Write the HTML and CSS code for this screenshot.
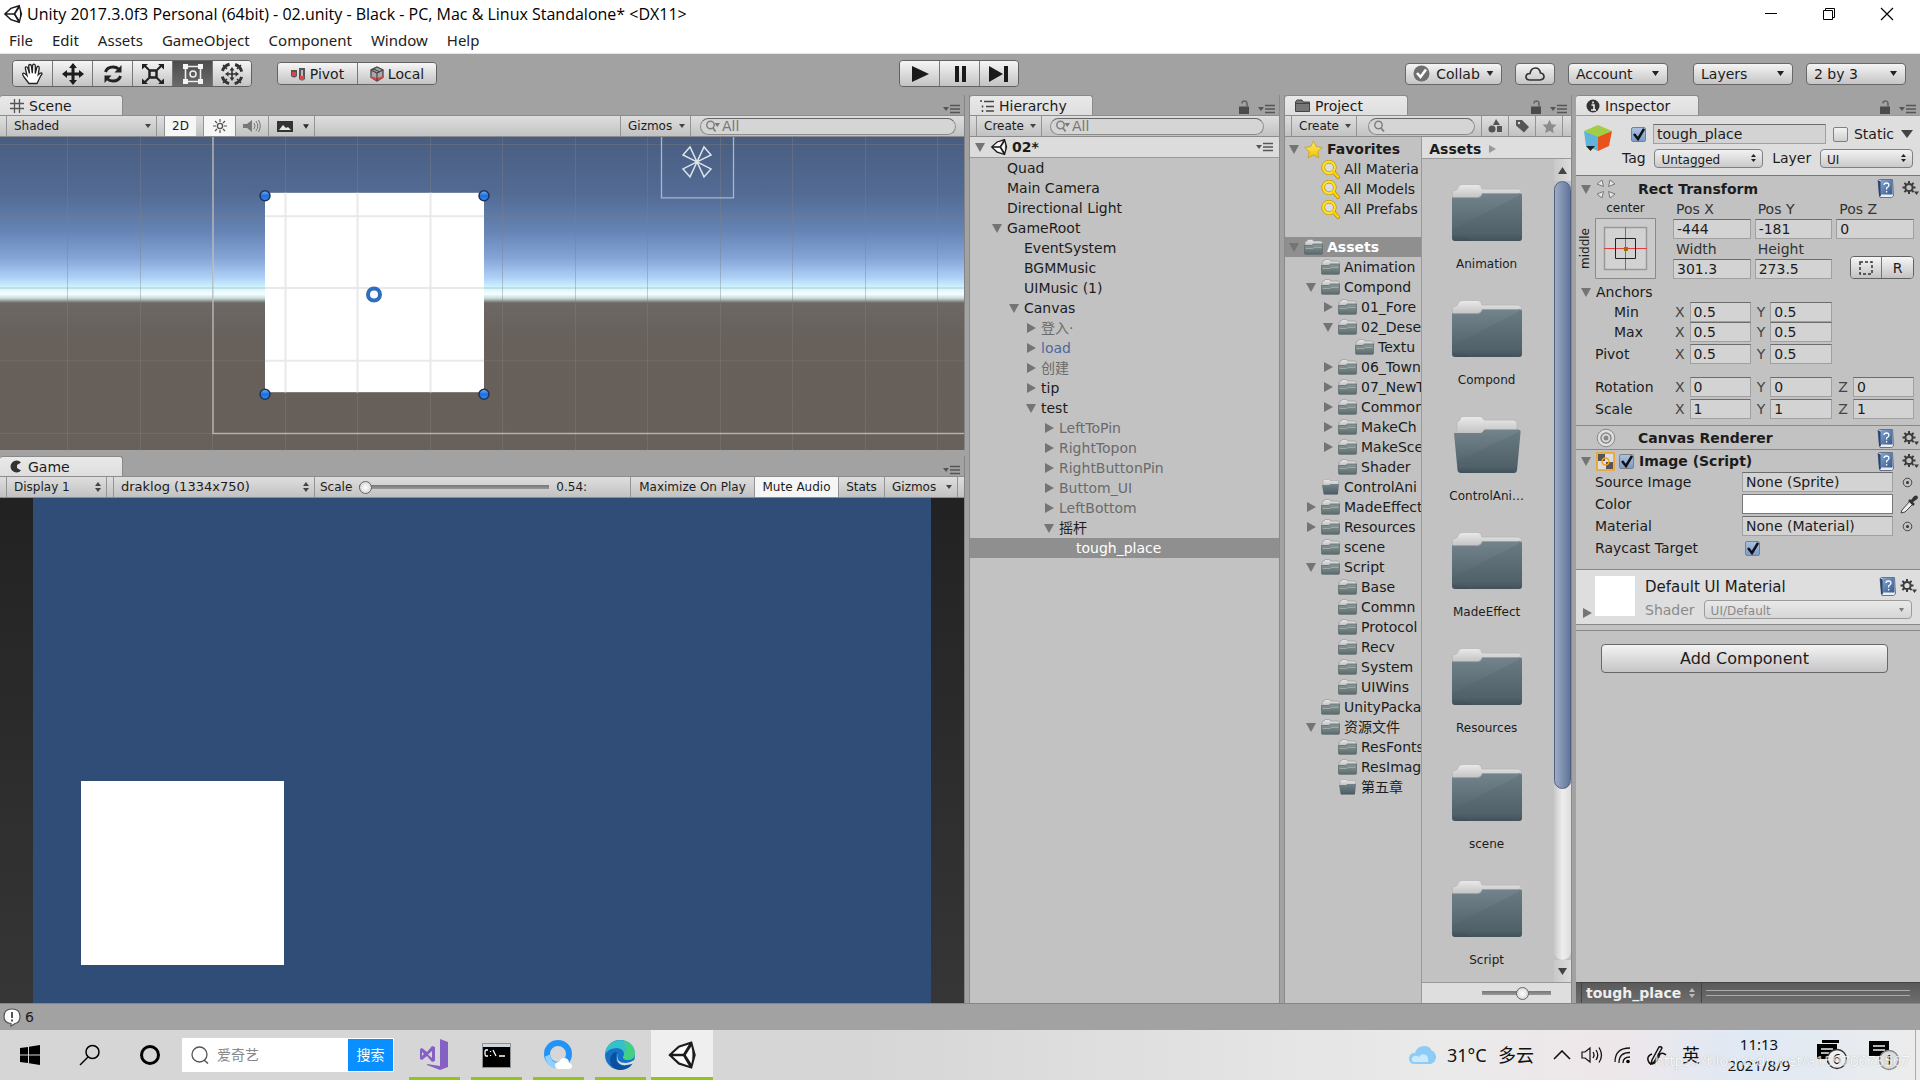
FILE: index.html
```html
<!DOCTYPE html>
<html lang="zh-CN">
<head>
<meta charset="utf-8">
<title>Unity 2017.3.0f3 Personal (64bit) - 02.unity</title>
<link rel="stylesheet" href="styles.css">
</head>
<body>
<svg class="defs" width="0" height="0" aria-hidden="true">
  <defs>
    <linearGradient id="gFolder" x1="0" y1="0" x2="0" y2="1"><stop offset="0" stop-color="#73848c"/><stop offset=".85" stop-color="#52626a"/><stop offset="1" stop-color="#3f4e56"/></linearGradient>
    <linearGradient id="gTab" x1="0" y1="0" x2="0" y2="1"><stop offset="0" stop-color="#eaeaea"/><stop offset="1" stop-color="#bdbdbd"/></linearGradient>
    <linearGradient id="gMini" x1="0" y1="0" x2="0" y2="1"><stop offset="0" stop-color="#8b9999"/><stop offset="1" stop-color="#5c6a6b"/></linearGradient>
    <linearGradient id="gBook" x1="0" y1="0" x2="1" y2="1"><stop offset="0" stop-color="#86a5cf"/><stop offset="1" stop-color="#35588c"/></linearGradient>
    <linearGradient id="gStar" x1="0" y1="0" x2="0" y2="1"><stop offset="0" stop-color="#fff06a"/><stop offset="1" stop-color="#f2c000"/></linearGradient>
    <linearGradient id="gBall" x1="0" y1="0" x2="0" y2="1"><stop offset="0" stop-color="#7fb0f0"/><stop offset=".5" stop-color="#1c6fe0"/><stop offset="1" stop-color="#2f8cff"/></linearGradient>
    <linearGradient id="gSky" x1="0" y1="0" x2="0" y2="1">
      <stop offset="0" stop-color="#495d80"/><stop offset=".18" stop-color="#536b94"/><stop offset=".3" stop-color="#6583b4"/><stop offset=".39" stop-color="#86a6d8"/><stop offset=".45" stop-color="#aed1f8"/><stop offset=".48" stop-color="#d0f3ff"/><stop offset=".502" stop-color="#f3ffff"/><stop offset=".515" stop-color="#c9dcd9"/><stop offset=".53" stop-color="#6d6865"/><stop offset=".65" stop-color="#67605b"/><stop offset="1" stop-color="#68605a"/>
    </linearGradient>
  </defs>
  <symbol id="unity" viewBox="0 0 24 24"><path fill="#1c1c1c" fill-rule="evenodd" d="M1 12 9 4.500 20 1l3 11-3 11-11-3.500zM4.500 11H13l4.500-7.500L10 6zM19.500 5 15 12l4.500 7c1.200-4 1.200-10 0-14zM4.500 13 10 18l7.500 2.500L13 13z"/><path fill="#fff" d="m5.500 10.600 5-4.300 5.800-1.600-3.500 5.900zM5.500 13.400l5 4.300 5.800 1.600-3.500-5.900zM19 6.500 15.600 12l3.400 5.500c.8-3 .8-8 0-11z" opacity=".85"/></symbol>
  <symbol id="down" viewBox="0 0 12 12"><path d="M1 2h10L6 11z" fill="#747474"/></symbol>
  <symbol id="right" viewBox="0 0 12 12"><path d="M2 1v10l9-5z" fill="#747474"/></symbol>
  <symbol id="folder" viewBox="0 0 19 16"><path d="M1 3.500 2 2h1l1-1.500h4.500L9.500 2H17l1.500 1.500V7H1z" fill="url(#gTab)" stroke="#8b8f8f" stroke-width=".6"/><path d="M.5 6.500h7L9.500 5h9v9.300q0 1-1 1h-16q-1 0-1-1z" fill="url(#gMini)" stroke="#59676a" stroke-width=".7"/><path d="M1.500 9.500h7l2-1h7" stroke="#a6b2b2" stroke-width=".8" fill="none"/></symbol>
  <symbol id="folderopen" viewBox="0 0 19 16"><path d="M2 2l1-1.500h5L9 1.500h8.500V7H2z" fill="url(#gTab)" stroke="#9a9a9a" stroke-width=".5"/><path d="M1 6h7l1.500-1H18l-1 9.500q0 1-1 1H3.500q-1 0-1-1z" fill="url(#gFolder)"/></symbol>
  <symbol id="bigfolder" viewBox="0 0 72 58"><path d="M1.500 12V7l4-1L8 2q1-1.500 3-1.500h16q2 0 3 2L31 5h36q3 0 3.500 3v8h-69z" fill="url(#gTab)" stroke="#b5b5b5" stroke-width=".7"/><path d="M1 13h26q2 0 3-1.500L31.500 9H68q3 0 3 3v42q0 3-3 3H4q-3 0-3-3z" fill="url(#gFolder)"/><path d="M71 10v44q0 3-3 3H20L1 46z" fill="#4b6069" opacity=".25"/><path d="M1.500 13.500H27q2 0 3-1.500l1.500-2.500H68" stroke="#93a5ac" fill="none"/></symbol>
  <symbol id="bigopen" viewBox="0 0 72 58"><path d="M6 20V7q0-1.500 2-2l2-3.500q.5-1 2-1h17q2 0 3 2L33 4h29q4 0 4 3v13z" fill="url(#gTab)" stroke="#b5b5b5" stroke-width=".7"/><path d="M3 17h26q2 0 3-1.500l1.500-2H67q3 0 2.500 3L66 54q-.5 3-3 3H10q-3 0-3.500-3z" fill="url(#gFolder)"/><path d="M69.500 15 66 54q-.5 3-3 3H22L5 46z" fill="#4b6069" opacity=".25"/></symbol>
  <symbol id="find" viewBox="0 0 19 19"><circle cx="8" cy="7.500" r="5.800" fill="#dcdcdc" stroke="#b99100" stroke-width="3.600"/><path d="m12.500 12 4.500 5" stroke="#b99100" stroke-width="4" stroke-linecap="round"/><circle cx="8" cy="7.500" r="5.800" fill="none" stroke="#ffe02a" stroke-width="2.200"/><path d="m12.500 12 4.500 5" stroke="#ffd400" stroke-width="2.500" stroke-linecap="round"/></symbol>
  <symbol id="star" viewBox="0 0 20 20"><path d="m10 1 2.800 6 6.400.8-4.700 4.500 1.200 6.600L10 15.700l-5.700 3.200 1.200-6.600L.8 7.800 7.200 7z" fill="url(#gStar)" stroke="#c79a1a" stroke-width=".8"/></symbol>
  <symbol id="menu" viewBox="0 0 17 10"><path d="M0 3h6L3 7z" fill="#555"/><path d="M7 1.500h10M7 5h10M7 8.500h10" stroke="#555" stroke-width="1.500"/></symbol>
  <symbol id="lock" viewBox="0 0 12 14"><path d="M1 6.500h10V14H1z" fill="#4b4b4b"/><path d="M9 6.500V4q0-3-2.500-3T4 3.500" fill="none" stroke="#666" stroke-width="1.600"/></symbol>
  <symbol id="caret" viewBox="0 0 8 6"><path d="M0 0h8L4 6z" fill="#2a2a2a"/></symbol>
  <symbol id="book" viewBox="0 0 17 19"><path d="M1 1.500 3 .5h12.500l1 16.500-2 1.500H3z" fill="#e9eef5" stroke="#4a5a70" stroke-width=".8"/><path d="M1 1.500 4 2.500v14l-2 1z" fill="#29436e"/><path d="M3.500 1h12v14.500h-12z" fill="url(#gBook)"/><path d="M7 6q.2-2 2.500-2T12 6q0 1.500-2.400 3v1.500M9.600 12v1.500" stroke="#fff" stroke-width="1.300" fill="none"/></symbol>
  <symbol id="gear" viewBox="0 0 17 17"><circle cx="7" cy="7.500" r="3.600" fill="none" stroke="#3c3c3c" stroke-width="2"/><path d="M7 1v2.500M7 11.500V14M.5 7.500H3M11 7.500h2.500M2.400 2.900l1.800 1.800M9.800 10.300l1.800 1.800M11.600 2.900 9.800 4.700M4.200 10.300l-1.800 1.800" stroke="#3c3c3c" stroke-width="2"/><path d="M12 11.500h5L14.500 15z" fill="#3c3c3c"/></symbol>
  <symbol id="lens" viewBox="0 0 14 12"><circle cx="4.500" cy="5" r="3.700" fill="none" stroke="#808080" stroke-width="1.500"/><path d="m7 8 3 3.500" stroke="#808080" stroke-width="1.800"/></symbol>
  <symbol id="lensv" viewBox="0 0 14 12"><circle cx="4.500" cy="5" r="3.700" fill="none" stroke="#808080" stroke-width="1.500"/><path d="m7 8 2.500 3.500" stroke="#808080" stroke-width="1.800"/><path d="M8.500 3H14l-2.700 4z" fill="#777"/></symbol>
  <symbol id="target" viewBox="0 0 11 11"><circle cx="5.500" cy="5.500" r="4.300" fill="none" stroke="#444"/><circle cx="5.500" cy="5.500" r="1.500" fill="#333"/></symbol>
</svg>

<header class="titlebar">
  <svg class="i20"><use href="#unity"/></svg>
  <h1>Unity 2017.3.0f3 Personal (64bit) - 02.unity - Black - PC, Mac &amp; Linux Standalone* &lt;DX11&gt;</h1>
  <div class="winbtns">
    <button aria-label="Minimize"><svg width="14" height="14"><path d="M1 6.500h12" stroke="#000"/></svg></button>
    <button aria-label="Restore"><svg width="14" height="14" fill="none" stroke="#000"><path d="M1.500 3.500h9v9h-9zM3.500 3.500v-2h9v9h-2"/></svg></button>
    <button aria-label="Close"><svg width="14" height="14"><path d="m1 1 12 12M13 1 1 13" stroke="#000" stroke-width="1.200"/></svg></button>
  </div>
</header>
<nav class="menubar"><a href="#">File</a><a href="#">Edit</a><a href="#">Assets</a><a href="#">GameObject</a><a href="#">Component</a><a href="#">Window</a><a href="#">Help</a></nav>

<div class="toolbar">
  <div class="tgroup">
    <div class="segs tall">
      <button aria-label="Hand"><svg width="24" height="22" viewBox="0 0 24 22"><path d="M8 20.500 3 14q-2-3-1-3.800 1.200-.7 4 2.300L4.500 6q-.5-2 .6-2.200T7 5.500l1.500 5-.8-7.300q0-1.700 1.200-1.700t1.500 1.700l.9 7 .3-7.500q.2-1.600 1.400-1.500t1.300 1.700v7.600l1.500-6q.5-1.500 1.600-1.200t.8 2l-1 6.500q2.500-2.500 3.500-1.800t-1 2.800L16 20.500z" fill="#fff" stroke="#222" stroke-width="1.300"/></svg></button>
      <button aria-label="Move"><svg width="22" height="22" viewBox="0 0 22 22"><path d="m11 0 4 5h-2.500v4.500H17V7l5 4-5 4v-2.500h-4.500V17H15l-4 5-4-5h2.500v-4.500H5V15l-5-4 5-4v2.500h4.500V5H7z" fill="#1c1c1c"/></svg></button>
      <button aria-label="Rotate"><svg width="22" height="22" viewBox="0 0 22 22"><path d="M3.500 9Q5 4 11 4q3.500 0 5.500 2M18.500 13Q17 18 11 18q-3.500 0-5.500-2" fill="none" stroke="#222" stroke-width="3"/><path d="M19.500 2v7.500h-7zM2.500 20v-7.500h7z" fill="#222"/></svg></button>
      <button aria-label="Scale"><svg width="24" height="22" viewBox="0 0 24 22"><path d="M8.500 7.500h7v7h-7z" fill="none" stroke="#222" stroke-width="2.500"/><path d="m3 2 5 5M21 2l-5 5M3 20l5-5M21 20l-5-5" stroke="#222" stroke-width="2"/><path d="M1 1h6L1 6.500zM23 1h-6l6 5.500zM1 21h6l-6-5.500zM23 21h-6l6-5.500z" fill="#222"/></svg></button>
      <button class="on" aria-label="Rect"><svg width="22" height="22" viewBox="0 0 22 22"><path d="M3.500 3.500h15v15h-15z" fill="none" stroke="#eee" stroke-width="1.600"/><path d="M1 1h5v5H1zM16 1h5v5h-5zM1 16h5v5H1zM16 16h5v5h-5z" fill="#f4f4f4"/><circle cx="11" cy="11" r="3" fill="none" stroke="#eee" stroke-width="1.500"/></svg></button>
      <button aria-label="Transform"><svg width="24" height="24" viewBox="0 0 24 24"><circle cx="12" cy="12" r="10" fill="none" stroke="#333" stroke-width="3" stroke-dasharray="10 5.700" stroke-dashoffset="-2.900"/><path d="m3 3 4 4M21 3l-4 4M3 21l4-4M21 21l-4-4" stroke="#333" stroke-width="1.500"/><path d="m12 5 2.500 3.500h-1.700v2.700h2.700V9.500L19 12l-3.500 2.500v-1.700h-2.700v2.700h1.700L12 19l-2.500-3.500h1.700v-2.700H8.500v1.700L5 12l3.500-2.500v1.700h2.700V8.500H9.500z" fill="#333"/></svg></button>
    </div>
    <div class="segs wide">
      <button><svg width="15" height="14"><path d="M0 3h6v6q-3 3-6 0z" fill="#555"/><path d="M1 5h4v4H1z" fill="#d8474b"/><path d="M8 1h6v11q-3 3-6 0z" fill="#555"/><path d="M10 3h2v7h-2z" fill="#bbb"/><path d="M9 9h4v4H9z" fill="#d8474b"/></svg>Pivot</button>
      <button><svg width="14" height="16" viewBox="0 0 14 16"><path d="m7 1 6 3v7.500L7 15l-6-3.500V4z" fill="#aaa" stroke="#444" stroke-width="1.300"/><path d="m1 10 6 2 6-2v2l-6 3-6-3z" fill="#d8474b"/><path d="m1 4 6 3 6-3M7 7v8M3 2.800l7 3.200" stroke="#444" fill="none" stroke-width="1.200"/></svg>Local</button>
    </div>
  </div>
  <div class="segs tall">
    <button aria-label="Play"><svg width="20" height="20"><path d="M2 2v16l17-8z" fill="#1a1a1a"/></svg></button>
    <button aria-label="Pause"><svg width="16" height="18"><path d="M3 1h4v16H3zM10 1h4v16h-4z" fill="#1a1a1a"/></svg></button>
    <button aria-label="Step"><svg width="22" height="20"><path d="M1 2v16l14-8zM16 2h4v16h-4z" fill="#1a1a1a"/></svg></button>
  </div>
  <div class="tgroup end">
    <button class="btn collab"><svg width="17" height="17"><circle cx="8.500" cy="8.500" r="8" fill="#6f6f6f"/><path d="m4 8 3.500 4L13 4.500" stroke="#fff" stroke-width="2.600" fill="none"/></svg>Collab<svg width="8" height="5"><use href="#caret"/></svg></button>
    <button class="btn cloud" aria-label="Services"><svg width="20" height="14"><path d="M5 13q-4 0-4-3.200T5 6.500Q6 1 10.500 1q4 0 5 5 3.500.5 3.500 3.600T15 13z" fill="none" stroke="#333" stroke-width="1.700"/></svg></button>
    <select class="drop" aria-label="Account"><option>Account</option></select>
    <select class="drop layers" aria-label="Layers"><option>Layers</option></select>
    <select class="drop" aria-label="Layout"><option>2 by 3</option></select>
  </div>
</div>

<main class="dock">
  <div class="col left">
    <section class="panel scene">
      <div class="tabs"><div class="tab"><svg width="14" height="14"><path d="M4.500 0v14M9.500 0v14M0 4.500h14M0 9.500h14" stroke="#555" stroke-width="1.300"/></svg>Scene</div><svg class="pm"><use href="#menu"/></svg></div>
      <div class="bar scenebar">
        <select class="cell shaded" aria-label="Draw mode"><option>Shaded</option></select>
        <button class="cell on two">2D</button>
        <button class="cell on light" aria-label="Lighting"><svg width="14" height="14"><circle cx="7" cy="7" r="2.600" fill="none" stroke="#555" stroke-width="1.400"/><path d="M7 0v3M7 11v3M0 7h3M11 7h3M2 2l2 2M10 10l2 2M12 2l-2 2M4 10l-2 2" stroke="#555" stroke-width="1.200"/></svg></button>
        <button class="cell ico" aria-label="Audio"><svg width="18" height="14"><path d="M0 5h4l5-4v12L4 9H0z" fill="#777"/><path d="M11 4q2 3 0 6M13 2q3.500 5 0 10M15.500 1q3.500 6 0 12" stroke="#777" fill="none"/></svg></button>
        <button class="cell fx" aria-label="Effects"><svg width="16" height="13"><path d="M0 1h16v11H0z" fill="#333"/><path d="m2 10 4-5 3 3 2-1 3 3z" fill="#e8e8e8"/></svg><svg width="6" height="5"><use href="#caret"/></svg></button>
        <select class="cell gz" aria-label="Gizmos"><option>Gizmos</option></select>
        <label class="search"><svg width="14" height="12"><use href="#lensv"/></svg><input type="text" placeholder="All" aria-label="Search scene"></label>
      </div>
      <svg class="view" viewBox="0 0 964 314" preserveAspectRatio="none" role="img" aria-label="Scene view">
        <rect width="964" height="314" fill="url(#gSky)"/>
        <path d="M67.500 0v314M140.500 0v314M212.500 0v314M285.500 0v314M357.500 0v314M430.500 0v314M502.500 0v314M575.500 0v314M647.500 0v314M720.500 0v314M792.500 0v314M865.500 0v314M937.500 0v314M0 7.500h964M0 79.500h964M0 151.500h964M0 224.500h964M0 297.500h964" stroke="#808080" stroke-opacity=".4"/>
        <path d="M213 0v297.500h751" fill="none" stroke="#c4c4c4" stroke-opacity=".8" stroke-width="1.500"/>
        <path d="M661.500 0v61h72V0" fill="none" stroke="#a9b6cb" stroke-width="1.300"/>
        <path d="m697 25-14-7 7-8zM697 25l14-7-7-8zM697 25l-14 7 7 8zM697 25l14 7-7 8z" fill="none" stroke="#dde3ea" stroke-width="1.500"/>
        <rect x="265" y="56" width="219" height="200" fill="#fff"/>
        <path d="M285.500 56v200M357.500 56v200M430.500 56v200M265 79.500h219M265 151.500h219M265 224.500h219" stroke="#e9e9e9" stroke-width="2"/>
        <g fill="url(#gBall)" stroke="#1f3352" stroke-width="1.500"><circle cx="265" cy="59" r="5"/><circle cx="484" cy="59" r="5"/><circle cx="265" cy="258" r="5"/><circle cx="484" cy="258" r="5"/></g>
        <circle cx="374" cy="158" r="6" fill="#fff" stroke="#2f6dbd" stroke-width="4"/>
      </svg>
    </section>
    <section class="panel game">
      <div class="tabs"><div class="tab"><svg width="13" height="13"><path d="M11 2.500A6 6 0 1 0 11 10.500L7 8V5z" fill="#333"/></svg>Game</div><svg class="pm"><use href="#menu"/></svg></div>
      <div class="bar gamebar">
        <select class="cell ud disp" aria-label="Display"><option>Display 1</option></select>
        <select class="cell ud res" aria-label="Resolution"><option>draklog (1334x750)</option></select>
        <label class="scale">Scale<input type="range" min="0" max="100" value="0"><span>0.54:</span></label>
        <button class="cell max">Maximize On Play</button>
        <button class="cell on mute">Mute Audio</button>
        <button class="cell stats">Stats</button>
        <select class="cell gg" aria-label="Gizmos"><option>Gizmos</option></select>
      </div>
      <div class="gameview"><div class="stage"><div class="quad"></div></div></div>
    </section>
  </div>

  <section class="panel hier">
    <div class="tabs"><div class="tab"><svg width="14" height="14"><path d="M4 2.500h10M6 7.500h8M6 12h8M1 1v2M2.500 6.500v2M2.500 11v2" stroke="#444" stroke-width="1.500"/></svg>Hierarchy</div><svg class="lk"><use href="#lock"/></svg><svg class="pm"><use href="#menu"/></svg></div>
    <div class="bar"><select class="cell create" aria-label="Create"><option>Create</option></select><label class="search"><svg width="14" height="12"><use href="#lensv"/></svg><input type="text" placeholder="All" aria-label="Search hierarchy"></label></div>
    <div class="scenehead"><svg class="ar"><use href="#down"/></svg><svg width="18" height="18"><use href="#unity"/></svg><b>02*</b><svg class="pm"><use href="#menu"/></svg></div>
    <div class="tree">
      <div class="row l1"><i class="ar"></i>Quad</div>
      <div class="row l1"><i class="ar"></i>Main Camera</div>
      <div class="row l1"><i class="ar"></i>Directional Light</div>
      <div class="row l1"><svg class="ar"><use href="#down"/></svg>GameRoot</div>
      <div class="row l2"><i class="ar"></i>EventSystem</div>
      <div class="row l2"><i class="ar"></i>BGMMusic</div>
      <div class="row l2"><i class="ar"></i>UIMusic (1)</div>
      <div class="row l2"><svg class="ar"><use href="#down"/></svg>Canvas</div>
      <div class="row l3 off"><svg class="ar"><use href="#right"/></svg>登入·</div>
      <div class="row l3 prefab"><svg class="ar"><use href="#right"/></svg>load</div>
      <div class="row l3 off"><svg class="ar"><use href="#right"/></svg>创建</div>
      <div class="row l3"><svg class="ar"><use href="#right"/></svg>tip</div>
      <div class="row l3"><svg class="ar"><use href="#down"/></svg>test</div>
      <div class="row l4 off"><svg class="ar"><use href="#right"/></svg>LeftToPin</div>
      <div class="row l4 off"><svg class="ar"><use href="#right"/></svg>RightTopon</div>
      <div class="row l4 off"><svg class="ar"><use href="#right"/></svg>RightButtonPin</div>
      <div class="row l4 off"><svg class="ar"><use href="#right"/></svg>Buttom_UI</div>
      <div class="row l4 off"><svg class="ar"><use href="#right"/></svg>LeftBottom</div>
      <div class="row l4"><svg class="ar"><use href="#down"/></svg>摇杆</div>
      <div class="row l5 sel"><i class="ar"></i>tough_place</div>
    </div>
  </section>

  <section class="panel proj">
    <div class="tabs"><div class="tab"><svg width="15" height="13"><path d="M.5 3 2 1h5l1 2h6.500v9.500H.5z" fill="#777" stroke="#444"/><path d="M1 4.500h13" stroke="#444"/></svg>Project</div><svg class="lk"><use href="#lock"/></svg><svg class="pm"><use href="#menu"/></svg></div>
    <div class="bar"><select class="cell create" aria-label="Create"><option>Create</option></select><label class="search"><svg width="14" height="12"><use href="#lens"/></svg><input type="text" aria-label="Search project"></label>
      <button class="cell sq" aria-label="Filter by type"><svg width="15" height="14"><path d="m8 0 4 6H5z" fill="#555"/><circle cx="4" cy="10" r="3.500" fill="#555"/><path d="M9 7h5v6H9z" fill="#555"/></svg></button>
      <button class="cell sq" aria-label="Filter by label"><svg width="15" height="14"><path d="M1 1h6l7 7-5 5.500-8-7z" fill="#555"/><circle cx="4" cy="4" r="1.200" fill="#ddd"/></svg></button>
      <button class="cell sq" aria-label="Save search"><svg width="15" height="15" viewBox="0 0 20 20"><path d="m10 1 2.800 6 6.400.8-4.700 4.500 1.200 6.600L10 15.700l-5.700 3.200 1.200-6.600L.8 7.800 7.200 7z" fill="#8c8c8c"/></svg></button><span class="cell tail"></span></div>
    <div class="split">
      <div class="tree ptree">
        <div class="row l0"><svg class="ar"><use href="#down"/></svg><svg class="fi st"><use href="#star"/></svg><b>Favorites</b></div>
        <div class="row l1"><svg class="fi st"><use href="#find"/></svg>All Materia</div>
        <div class="row l1"><svg class="fi st"><use href="#find"/></svg>All Models</div>
        <div class="row l1"><svg class="fi st"><use href="#find"/></svg>All Prefabs</div>
        <div class="row l0 sel gap"><svg class="ar"><use href="#down"/></svg><svg class="fi"><use href="#folder"/></svg><b>Assets</b></div>
        <div class="row l1"><svg class="fi"><use href="#folder"/></svg>Animation</div>
        <div class="row l1"><svg class="ar"><use href="#down"/></svg><svg class="fi"><use href="#folder"/></svg>Compond</div>
        <div class="row l2"><svg class="ar"><use href="#right"/></svg><svg class="fi"><use href="#folder"/></svg>01_Fore</div>
        <div class="row l2"><svg class="ar"><use href="#down"/></svg><svg class="fi"><use href="#folder"/></svg>02_Dese</div>
        <div class="row l3"><svg class="fi"><use href="#folder"/></svg>Textu</div>
        <div class="row l2"><svg class="ar"><use href="#right"/></svg><svg class="fi"><use href="#folder"/></svg>06_Town</div>
        <div class="row l2"><svg class="ar"><use href="#right"/></svg><svg class="fi"><use href="#folder"/></svg>07_NewT</div>
        <div class="row l2"><svg class="ar"><use href="#right"/></svg><svg class="fi"><use href="#folder"/></svg>Common</div>
        <div class="row l2"><svg class="ar"><use href="#right"/></svg><svg class="fi"><use href="#folder"/></svg>MakeCh</div>
        <div class="row l2"><svg class="ar"><use href="#right"/></svg><svg class="fi"><use href="#folder"/></svg>MakeSce</div>
        <div class="row l2"><svg class="fi"><use href="#folder"/></svg>Shader</div>
        <div class="row l1"><svg class="fi"><use href="#folderopen"/></svg>ControlAni</div>
        <div class="row l1"><svg class="ar"><use href="#right"/></svg><svg class="fi"><use href="#folder"/></svg>MadeEffect</div>
        <div class="row l1"><svg class="ar"><use href="#right"/></svg><svg class="fi"><use href="#folder"/></svg>Resources</div>
        <div class="row l1"><svg class="fi"><use href="#folder"/></svg>scene</div>
        <div class="row l1"><svg class="ar"><use href="#down"/></svg><svg class="fi"><use href="#folder"/></svg>Script</div>
        <div class="row l2"><svg class="fi"><use href="#folder"/></svg>Base</div>
        <div class="row l2"><svg class="fi"><use href="#folder"/></svg>Commn</div>
        <div class="row l2"><svg class="fi"><use href="#folder"/></svg>Protocol</div>
        <div class="row l2"><svg class="fi"><use href="#folder"/></svg>Recv</div>
        <div class="row l2"><svg class="fi"><use href="#folder"/></svg>System</div>
        <div class="row l2"><svg class="fi"><use href="#folder"/></svg>UIWins</div>
        <div class="row l1"><svg class="fi"><use href="#folder"/></svg>UnityPacka</div>
        <div class="row l1"><svg class="ar"><use href="#down"/></svg><svg class="fi"><use href="#folder"/></svg>资源文件</div>
        <div class="row l2"><svg class="fi"><use href="#folder"/></svg>ResFonts</div>
        <div class="row l2"><svg class="fi"><use href="#folder"/></svg>ResImag</div>
        <div class="row l2"><svg class="fi"><use href="#folderopen"/></svg>第五章</div>
      </div>
      <div class="assets">
        <div class="crumb"><b>Assets</b><svg width="7" height="8"><path d="M0 0v8l7-4z" fill="#999"/></svg></div>
        <div class="abody">
          <div class="agrid">
            <figure><svg><use href="#bigfolder"/></svg><figcaption>Animation</figcaption></figure>
            <figure><svg><use href="#bigfolder"/></svg><figcaption>Compond</figcaption></figure>
            <figure><svg><use href="#bigopen"/></svg><figcaption>ControlAni…</figcaption></figure>
            <figure><svg><use href="#bigfolder"/></svg><figcaption>MadeEffect</figcaption></figure>
            <figure><svg><use href="#bigfolder"/></svg><figcaption>Resources</figcaption></figure>
            <figure><svg><use href="#bigfolder"/></svg><figcaption>scene</figcaption></figure>
            <figure><svg><use href="#bigfolder"/></svg><figcaption>Script</figcaption></figure>
          </div>
          <div class="sbar"><button aria-label="Scroll up"><svg width="9" height="7"><path d="M0 7h9L4.500 0z" fill="#444"/></svg></button><div class="track"><div class="thumb"></div></div><button aria-label="Scroll down"><svg width="9" height="7"><path d="M0 0h9L4.500 7z" fill="#444"/></svg></button></div>
        </div>
        <div class="afoot"><input type="range" min="0" max="100" value="60" aria-label="Icon size"></div>
      </div>
    </div>
  </section>

  <section class="panel insp">
    <div class="tabs"><div class="tab"><svg width="14" height="14"><circle cx="7" cy="7" r="6.500" fill="#333"/><path d="M7 2.500v2M5.500 6H8v5M5 11h5" stroke="#eee" stroke-width="1.600" fill="none"/></svg>Inspector</div><svg class="lk"><use href="#lock"/></svg><svg class="pm"><use href="#menu"/></svg></div>
    <div class="ohead">
      <svg class="cube" viewBox="0 0 30 30"><path d="M1 7 15 12v15L3 22z" fill="#5fb4dc"/><path d="m29 7-14 5v15l11-5z" fill="#e8531c"/><path d="M1 7 15 1l14 6-14 6z" fill="#a3cc47"/><path d="M3 22h9l-4.500 5z" fill="#222"/></svg>
      <div class="orows">
        <div class="orow"><input type="checkbox" class="ck" checked aria-label="Active"><input class="f nm" type="text" value="tough_place" aria-label="Name"><label class="stat"><input type="checkbox" class="ck">Static</label><svg width="12" height="8"><path d="M0 0h12L6 8z" fill="#444"/></svg></div>
        <div class="orow tagrow"><label for="tag">Tag</label><select id="tag" class="pop"><option>Untagged</option></select><label for="layer">Layer</label><select id="layer" class="pop"><option>UI</option></select></div>
      </div>
    </div>
    <div class="comp">
      <div class="chead rth rect"><svg class="ar"><use href="#down"/></svg><svg width="20" height="20" viewBox="0 0 20 20"><path d="m1 5 5-4 1.500 6.500zM19 5l-5-4-1.500 6.500zM1 15l5 4 1.500-6.500zM19 15l-5 4-1.500-6.500z" fill="#e8e8e8" stroke="#777"/></svg><b>Rect Transform</b><svg class="bk"><use href="#book"/></svg><svg class="gr"><use href="#gear"/></svg></div>
      <div class="rt">
        <div class="anchor"><span class="mid">middle</span><div class="abox"><span>center</span><svg width="61" height="61"><path d="M.5.500h60v60H.5z" fill="#cbcbcb" stroke="#8a8a8a"/><path d="M9.500 9.500h42v42h-42z" fill="#d2d2d2" stroke="#999" stroke-width="1.500"/><path d="M30.500 9v43M9 30.500h43" stroke="#e04040"/><path d="M20.500 20.500h20v20h-20z" fill="none" stroke="#222"/><path d="M29 29h4v4h-4z" fill="#a07000"/></svg></div></div>
        <div class="rtg">
          <label for="px">Pos X</label><label for="py">Pos Y</label><label for="pz">Pos Z</label>
          <input class="f" id="px" value="-444"><input class="f" id="py" value="-181"><input class="f" id="pz" value="0">
          <label for="pw">Width</label><label for="ph">Height</label><span></span>
          <input class="f" id="pw" value="301.3"><input class="f" id="ph" value="273.5"><div class="segs rb"><button aria-label="Blueprint mode"><svg width="14" height="14"><path d="M1 1h12v12H1z" fill="none" stroke="#333" stroke-width="1.500" stroke-dasharray="3 2"/></svg></button><button>R</button></div>
        </div>
      </div>
      <div class="prow anc"><svg class="ar"><use href="#down"/></svg>Anchors</div>
      <div class="prow sub"><span>Min</span><label>X<input class="f" value="0.5"></label><label>Y<input class="f" value="0.5"></label></div>
      <div class="prow sub"><span>Max</span><label>X<input class="f" value="0.5"></label><label>Y<input class="f" value="0.5"></label></div>
      <div class="prow sp"><span>Pivot</span><label>X<input class="f" value="0.5"></label><label>Y<input class="f" value="0.5"></label></div>
      <div class="prow rot"><span>Rotation</span><label>X<input class="f" value="0"></label><label>Y<input class="f" value="0"></label><label>Z<input class="f" value="0"></label></div>
      <div class="prow sp"><span>Scale</span><label>X<input class="f" value="1"></label><label>Y<input class="f" value="1"></label><label>Z<input class="f" value="1"></label></div>
    </div>
    <div class="comp slim"><div class="chead rth"><i class="ar"></i><svg width="20" height="20"><circle cx="10" cy="10" r="8.800" fill="#ddd" stroke="#888"/><circle cx="10" cy="10" r="5" fill="none" stroke="#888" stroke-width="1.500"/><circle cx="10" cy="10" r="2.500" fill="#888"/></svg><b>Canvas Renderer</b><svg class="bk"><use href="#book"/></svg><svg class="gr"><use href="#gear"/></svg></div></div>
    <div class="comp img">
      <div class="chead"><svg class="ar"><use href="#down"/></svg><svg width="19" height="19"><path d="M1 1h17v17H1z" fill="#ddd" stroke="#f5a01e" stroke-width="1.600"/><path d="M2 2h7v7H2zM10 10h7v7h-7z" fill="#555"/><circle cx="9.500" cy="9.500" r="3.500" fill="none" stroke="#f5a01e" stroke-width="1.500"/></svg><input type="checkbox" class="ck" checked aria-label="Image enabled"><b>Image (Script)</b><svg class="bk"><use href="#book"/></svg><svg class="gr"><use href="#gear"/></svg></div>
      <div class="irow"><label for="src">Source Image</label><input class="f" id="src" value="None (Sprite)"><svg class="tg"><use href="#target"/></svg></div>
      <div class="irow"><label for="colr">Color</label><button class="f swatch" id="colr" aria-label="White"></button><svg width="18" height="20" viewBox="0 0 18 20"><path d="m2 16 8-9 3 3-8 8-4 1z" fill="#eee" stroke="#444"/><path d="m9 6 5 5M11 8l4-5q2-1 1.500 1z" stroke="#333" stroke-width="2.500"/></svg></div>
      <div class="irow"><label for="mat">Material</label><input class="f" id="mat" value="None (Material)"><svg class="tg"><use href="#target"/></svg></div>
      <div class="irow"><label for="ray">Raycast Target</label><input type="checkbox" class="ck" id="ray" checked></div>
    </div>
    <div class="mhead">
      <svg class="ar"><use href="#right"/></svg><div class="thumbm"></div>
      <div class="mtxt"><div class="mt"><span>Default UI Material</span><svg class="bk"><use href="#book"/></svg><svg class="gr"><use href="#gear"/></svg></div>
      <div class="ms"><label for="shd">Shader</label><select id="shd" class="pop dim" disabled><option>UI/Default</option></select></div></div>
    </div>
    <div class="addrow"><button class="btn add">Add Component</button></div>
    <div class="foot"><button>tough_place<svg width="6" height="10"><path d="M0 4h6L3 0zM0 6h6l-3 4z" fill="#bbb"/></svg></button><span class="grip"></span></div>
  </section>
</main>

<div class="status"><svg width="18" height="19"><path d="M9 1q8 0 8 7.500 0 6-5 7L8 18v-2.500q-7-.5-7-7Q1 1 9 1z" fill="#fff" stroke="#555" stroke-width="1.200"/><path d="M9 4v6M9 11.500v2" stroke="#444" stroke-width="1.800"/></svg>6</div>

<footer class="taskbar">
  <button class="tb" aria-label="Start"><svg width="20" height="20"><path d="m0 3 8-1v7.500H0zM9 1.800 20 0v9.500H9zM0 10.500h8V18l-8-1zM9 10.500h11V20L9 18.200z" fill="#000"/></svg></button>
  <button class="tb" aria-label="Search"><svg width="22" height="22"><circle cx="13.500" cy="8" r="6.500" fill="none" stroke="#000" stroke-width="1.500"/><path d="M9 13 1 21" stroke="#000" stroke-width="1.500"/></svg></button>
  <button class="tb" aria-label="Cortana"><svg width="22" height="22"><circle cx="11" cy="11" r="8.500" fill="none" stroke="#000" stroke-width="3"/></svg></button>
  <form class="tsearch"><svg width="18" height="18"><circle cx="8.500" cy="8.500" r="7.500" fill="none" stroke="#555" stroke-width="1.300"/><path d="m13 14 4 3.500" stroke="#555" stroke-width="1.500"/></svg><input type="text" placeholder="爱奇艺" aria-label="搜索"><button type="button">搜索</button></form>
  <button class="app" aria-label="Visual Studio"><svg width="30" height="32" viewBox="0 0 30 32"><path d="m21 0 8 3v25l-8 3L8 26v-1l13 2z" fill="#8661c5"/><path d="m1 10 2-1 5 4 5-6 3 1v14l-3 1-5-6-5 4-2-1zm2 3v4l2-2zm10-1-4 3.500 4 3.500z" fill="#8661c5" fill-rule="evenodd"/></svg></button>
  <button class="app" aria-label="Command Prompt"><svg width="29" height="25" viewBox="0 0 29 25"><path d="M0 0h29v25H0z" fill="#8b9298"/><path d="M1 1h27v3H1z" fill="#cfd6dc"/><path d="M1 4h27v20H1z" fill="#000"/><path d="M6 7H4q-1 0-1 3t1 3h2M8.500 8v1M8.500 12v1M11 7l3 6M17 13h6" stroke="#fff" stroke-width="1.300" fill="none"/></svg></button>
  <button class="app" aria-label="QQ Browser"><svg width="30" height="30"><circle cx="15" cy="14" r="11" fill="none" stroke="#2493f7" stroke-width="6"/><path d="M15 28.500q-11 0-13-12l5-2q1 8 8 8.500z" fill="#8fd0ff"/><path d="M15 29q-3-.5-3-4 .5-3 4-3 1.500-4 5.500-4 4.500.5 4.500 5 3.500.5 3 3.500T25.500 29z" fill="#fff"/></svg></button>
  <button class="app" aria-label="Edge"><svg width="30" height="30" viewBox="0 0 30 30"><circle cx="15" cy="15" r="15" fill="#1473c8"/><path d="M0 14Q2 1 15 0q14 1 15 13 0 7-7 7-5 0-5-3 1-1 1-3 0-5-7-6Q4 8 0 14z" fill="#35c1c9"/><path d="M18 1q11 2 12 12 0 7-7 7-5 0-5-3 1-1 1-3 5-4-1-13z" fill="#4bd36d" opacity=".75"/><path d="M12 12q-4 12 7 14 5 0 9-3-4 7-13 7Q5 29 5 20q1-8 7-8z" fill="#0c4f9e"/><path d="M13 13q-3 10 8 10 4 0 8-3 0 3-2 4-15 4-15-6 0-3 1-5z" fill="#d6dfe6"/></svg></button>
  <button class="app active" aria-label="Unity"><svg width="30" height="30"><use href="#unity"/></svg></button>
  <div class="tray">
    <svg width="28" height="20"><path d="M6 19q-6 0-6-5.500T6 8q2-7 9-7 6 0 7.500 4.500Q27 7 27 12t-5 7z" fill="#8ecbf5"/><path d="M4 17q-3-4 1-6 3-1 5 1 2-4 7-2 3 2 2 7z" fill="#d8f0ff" opacity=".8"/></svg>
    <span class="temp">31°C</span><span class="sky">多云</span>
    <svg class="chev" width="18" height="10"><path d="m1 9 8-8 8 8" stroke="#111" fill="none" stroke-width="1.600"/></svg>
    <svg class="spk" width="22" height="18"><path d="M1 6h3l5-4v14l-5-4H1z" fill="none" stroke="#111" stroke-width="1.200"/><path d="M12 6q2 3 0 6M15 4q3.500 5 0 10M18 1.500q5 7.500 0 15" stroke="#111" fill="none" stroke-width="1.300"/></svg>
    <svg class="wifi" width="17" height="18"><path d="M1 16Q1 2 16 2M5 17Q5 6.500 16 6.500M9 17q0-6 7-6" stroke="#111" fill="none" stroke-width="1.300"/><circle cx="14" cy="15.500" r="1.800"/></svg>
    <svg class="pen" width="22" height="20"><path d="m6 15 7-13q2-1 3 1L8 17l-3 2zM6 9q-5 2-4 6t4 4q5-1 8-10 3-2 6 1" stroke="#111" fill="none" stroke-width="1.500"/></svg>
    <span class="ime">英</span>
    <div class="clock"><span>11:13</span><span>2021/8/9</span></div>
    <svg class="n1" width="32" height="30"><path d="M5 0h17v3H5zM0 4h20v15h-6l-4 4v-4H0z" fill="#000"/><path d="M4 9h12M4 13h8" stroke="#eee" stroke-width="1.500"/><circle cx="20" cy="19" r="9.500" fill="#f0f0f0" stroke="#333" stroke-width="1.300"/><text x="16" y="24" class="badge">6</text></svg>
    <svg class="n2" width="32" height="32"><path d="M0 2h20v15h-6l-4 4v-4H0z" fill="#000"/><path d="M4 7h12M4 11h12" stroke="#eee" stroke-width="1.500"/><circle cx="20" cy="21" r="9.500" fill="#ddd" stroke="#888" stroke-width="1.300"/><text x="16" y="26" class="badge">1</text></svg>
  </div>
  <span class="mark">https://blog.csdn.net/a15970673567</span>
</footer>
</body>
</html>
```
FILE: styles.css
```css
* { box-sizing: border-box; }
html { height: 100%; }
body {
  margin: 0;
  min-height: 100vh;
  display: flex;
  flex-direction: column;
  background: #a2a2a2;
  color: #1c1c1c;
  font: 14px/20px "DejaVu Sans", "Noto Sans CJK SC", sans-serif;
}
button, input, select { font: inherit; color: inherit; margin: 0; padding: 0; border: 0; border-radius: 0; background: none; }
select { appearance: none; }
svg { flex: none; display: block; }
.defs { position: absolute; }
.i20 { width: 20px; height: 20px; }

.titlebar { height: 28px; flex: none; display: flex; align-items: center; gap: 4px; padding: 0 4px 0 3px; background: #fff; }
.titlebar h1 { margin: 0; flex: 1; font: 16px/28px "Open Sans", "Noto Sans", sans-serif; color: #000; }
.winbtns { display: flex; }
.winbtns button { width: 58px; height: 28px; display: grid; place-items: center; }
.menubar { height: 26px; flex: none; display: flex; gap: 19px; padding: 0 9px; background: #fff; border-bottom: 1px solid #e6e6e6; font: 15px/25px "Noto Sans", "Open Sans", sans-serif; }
.menubar a { color: #222; text-decoration: none; }

.toolbar { height: 41px; flex: none; display: grid; grid-template-columns: 1fr auto 1fr; align-items: center; padding: 0 14px 2px 12px; }
.tgroup { display: flex; align-items: center; gap: 25px; }
.end { justify-content: flex-end; gap: 13px; }
.segs { display: flex; border: 1px solid #626262; border-radius: 4px; overflow: hidden; }
.segs button { display: flex; align-items: center; justify-content: center; gap: 4px; background: linear-gradient(#f6f6f6, #c4c2c4); border-left: 1px solid #777; }
.segs button:first-child { border-left: 0; }
.tall { height: 27px; }
.tall button { width: 40px; }
.tall button:first-child, .tall button:last-child { width: 39px; }
.wide { height: 23px; }
.wide button { width: 79px; }
.segs .on { background: linear-gradient(#4c4c4c, #6a6a6a); }
.btn, .drop { height: 22px; border: 1px solid #686868; border-radius: 4px; background: linear-gradient(#f4f4f4, #c6c4c6); }
.btn { display: flex; align-items: center; justify-content: center; gap: 6px; }
.collab { width: 97px; }
.cloud { width: 40px; }
.drop { width: 100px; padding-left: 7px; background: url("data:image/svg+xml,%3Csvg xmlns='http://www.w3.org/2000/svg' width='7' height='6'%3E%3Cpath d='M0 0h7L3.500 5z' fill='%23222'/%3E%3C/svg%3E") no-repeat right 8px center, linear-gradient(#f4f4f4, #c6c4c6); }
.layers { margin-left: 12px; }

.dock { flex: 1; min-height: 0; display: grid; grid-template-columns: 965fr 311fr 288fr 344fr; grid-template-rows: minmax(0, 1fr); gap: 4px; }
.dock > * { min-width: 0; }
.col { display: flex; flex-direction: column; gap: 6px; }
.panel { display: flex; flex-direction: column; min-height: 0; }
.scene { flex: 355; border-right: 1px solid #858585; }
.game { flex: 547; border-right: 1px solid #858585; }
.hier, .proj { border: solid #8a8a8a; border-width: 0 1px; }
.tabs { height: 20px; flex: none; display: flex; align-items: flex-end; gap: 8px; padding-right: 4px; }
.tab { width: 123px; height: 20px; padding-left: 10px; margin-right: auto; display: flex; align-items: center; gap: 5px; line-height: 18px; background: linear-gradient(#e9e9e9, #dedede); border: solid #8a8a8a; border-width: 1px 1px 0 0; border-radius: 3px 3px 0 0; }
.pm { width: 17px; height: 10px; }
.lk { width: 12px; height: 14px; }
.tabs .pm, .tabs .lk { margin-bottom: 1px; }

.bar { height: 22px; flex: none; display: flex; align-items: stretch; background: linear-gradient(#dedede, #c2c2c2); border: solid #8c8c8c; border-width: 1px 0; font-size: 12px; padding-left: 6px; }
.cell { border-left: 1px solid #949494; padding: 0 7px; display: flex; align-items: center; justify-content: center; }
.bar .on { background: #f6f6f6; }
select.cell { display: block; background: url("data:image/svg+xml,%3Csvg xmlns='http://www.w3.org/2000/svg' width='7' height='5'%3E%3Cpath d='M0 0h6L3 4z' fill='%23444'/%3E%3C/svg%3E") no-repeat right 4px center; }
select.ud { background-image: url("data:image/svg+xml,%3Csvg xmlns='http://www.w3.org/2000/svg' width='6' height='10'%3E%3Cpath d='M0 4h6L3 0zM0 6h6L3 10z' fill='%23444'/%3E%3C/svg%3E"); background-position: right 5px center; }
.shaded { width: 151px; margin-right: 7px; border-right: 1px solid #949494; }
.two { width: 32px; padding: 0; margin-right: 7px; }
.light { width: 32px; padding: 0; }
.ico { width: 33px; }
.fx { gap: 10px; border-right: 1px solid #949494; padding: 0 5px 0 8px; margin-right: auto; }
.gz { width: 71px; border-right: 1px solid #949494; }
.search { flex: none; width: 256px; height: 17px; align-self: center; margin: 0 8px; display: flex; align-items: center; gap: 2px; padding: 0 6px 0 5px; border: 1px solid #8c8c8c; border-top-color: #666; border-radius: 9px; background: #d5d5d5; }
.search input { min-width: 0; flex: 1; height: 15px; font-size: 14px; line-height: 15px; outline: 0; }
.search input::placeholder { color: #777; opacity: 1; }
.scene .search { margin-left: 9px; }
.create { width: 66px; border-right: 1px solid #949494; }
.hier .search { flex: 1; margin: 0 15px 0 8px; }
.proj .search { flex: 1; min-width: 0; margin: 0 6px 0 11px; }
.sq { width: 27px; padding: 0; }
.tail { width: 9px; padding: 0; }
.view { flex: 1; min-height: 0; width: 100%; background: #68605a; }

.disp { width: 101px; margin-right: 6px; border-right: 1px solid #949494; }
.res { width: 201px; font-size: 13px; }
.scale { flex: 1; border-left: 1px solid #949494; padding: 0 6px 0 5px; display: flex; align-items: center; gap: 7px; }
.scale input { width: 190px; }
.gamebar button.cell { padding: 0; }
.max { width: 124px; }
.mute { width: 84px; }
.stats { width: 46px; }
.gg { width: 74px; border-right: 1px solid #949494; margin-right: 6px; }
input[type=range] { appearance: none; height: 14px; background: linear-gradient(#777, #999) no-repeat center / 100% 4px; }
input[type=range]::-webkit-slider-thumb { appearance: none; width: 13px; height: 13px; border-radius: 50%; border: 1px solid #666; background: radial-gradient(#fff, #ccc); }
.gameview { flex: 1; padding: 0 33px; background: linear-gradient(#222, #363636); display: flex; }
.stage { flex: 1; background: #304d78; position: relative; }
.quad { position: absolute; left: 5.4%; top: 56%; width: 22.6%; height: 36.4%; background: #fff; }

.scenehead { height: 21px; flex: none; display: flex; align-items: center; gap: 4px; padding: 0 6px 0 4px; background: #dcdcdc; border-bottom: 1px solid #999; }
.scenehead .pm { margin-left: auto; }
.tree { flex: 1; background: #c2c2c2; overflow: hidden; }
.row { height: 20px; display: flex; align-items: center; gap: 4px; white-space: nowrap; }
.row svg, .row i { flex: none; }
.ar { width: 12px; height: 12px; flex: none; }
.row > svg.fi { width: 19px; height: 16px; }
.row > svg.st { height: 19px; }
.l1 { padding-left: 21px; } .l2 { padding-left: 38px; } .l3 { padding-left: 55px; } .l4 { padding-left: 73px; } .l5 { padding-left: 90px; }
.off { color: #6a6a6a; }
.prefab { color: #4f68a0; }
.sel { background: #8f8f8f; color: #fff; }

.split { flex: 1; display: flex; min-height: 0; }
.ptree { flex: none; width: 48%; padding-top: 2px; border-right: 1px solid #999; }
.ptree .l0 { padding-left: 3px; }
.ptree .l1:not(:has(.ar)) { padding-left: 36px; }
.ptree .l2:not(:has(.ar)) { padding-left: 53px; }
.ptree .l1:has(.ar) { padding-left: 20px; }
.ptree .l2:has(.ar) { padding-left: 37px; }
.ptree .l3 { padding-left: 70px; }
.gap { margin-top: 18px; }
.assets { flex: 1; min-width: 0; display: flex; flex-direction: column; background: #c2c2c2; }
.crumb { height: 22px; flex: none; display: flex; align-items: center; gap: 8px; padding: 2px 0 0 7px; background: #dedede; border-bottom: 1px solid #999; }
.abody { flex: 1; min-height: 0; display: flex; }
.agrid { flex: 1; overflow: hidden; padding: 25px 3px 0 0; }
.agrid figure { margin: 0 0 29px; height: 87px; display: flex; flex-direction: column; align-items: center; justify-content: space-between; }
.agrid figure:last-child { margin-bottom: 0; }
.agrid svg { width: 72px; height: 58px; }
.agrid figcaption { font-size: 12px; line-height: 14px; }
.sbar { width: 17px; display: flex; flex-direction: column; }
.sbar button { height: 22px; display: grid; place-items: center; background: linear-gradient(90deg, #c8c8c8, #dcdcdc); }
.track { flex: 1; border-radius: 9px; background: linear-gradient(90deg, #c8c8c8, #eee 50%, #ddd); }
.thumb { height: 78%; border: 1px solid #506080; border-radius: 9px; background: linear-gradient(90deg, #9cabc5, #60759c); }
.afoot { height: 21px; flex: none; display: flex; align-items: center; justify-content: flex-end; padding-right: 20px; background: #dedede; border-top: 1px solid #999; }
.afoot input { width: 69px; }

.insp { background: #c2c2c2; }
.insp .tabs { background: #a2a2a2; }
.ohead { height: 61px; flex: none; display: flex; gap: 9px; padding: 8px 7px 0; background: #dedede; border-top: 1px solid #999; border-bottom: 1px solid #777; }
.cube { width: 30px; height: 30px; }
.orows { flex: 1; min-width: 0; display: flex; flex-direction: column; gap: 4px; }
.orow { display: flex; align-items: center; height: 20px; }
.orow > .ck { margin: 0 7px 0 9px; }
.ck { appearance: none; width: 15px; height: 15px; flex: none; border: 1px solid #808080; border-radius: 2px; background: linear-gradient(#f2f2f2, #cfcfcf); }
.ck:checked { background: url("data:image/svg+xml,%3Csvg xmlns='http://www.w3.org/2000/svg' width='13' height='13'%3E%3Cpath d='m2 6 4 5 6-10' fill='none' stroke='%23111' stroke-width='2.500'/%3E%3C/svg%3E"), linear-gradient(#a9c0e2, #7c9ccb); }
.f { height: 20px; min-width: 0; padding: 0 3px; border: 1px solid #a0a0a0; border-top-color: #6c6c6c; background: #d3d3d3; outline: 0; }
.nm { flex: 1; margin-right: 7px; }
.stat { display: flex; align-items: center; gap: 6px; margin-right: 7px; }
.tagrow { justify-content: space-between; }
.tagrow select { width: 109px; }
.tagrow #layer { width: 93px; }
.pop { height: 19px; padding-left: 6px; font-size: 12px; border: 1px solid #808080; border-radius: 4px; background: url("data:image/svg+xml,%3Csvg xmlns='http://www.w3.org/2000/svg' width='5' height='8'%3E%3Cpath d='M0 3h5L2.500 0zM0 5h5L2.500 8z' fill='%23222'/%3E%3C/svg%3E") no-repeat right 6px center, linear-gradient(#f2f2f2, #cacaca); }
.comp { flex: none; border-bottom: 1px solid #888; padding: 0 6px 6px 0; }
.chead { height: 24px; display: flex; align-items: center; gap: 4px; padding-left: 4px; margin-right: -5px; }
.chead b { flex: 1; }
.rth b { padding-left: 18px; }
.rect { height: 23px; padding-top: 2px; }
.bk { width: 17px; height: 19px; }
.gr { width: 17px; height: 17px; }
.chead .bk, .mt .bk { margin-right: 4px; }
.rt { display: flex; }
.anchor { width: 97px; flex: none; display: flex; font-size: 12px; line-height: 18px; }
.mid { writing-mode: vertical-rl; transform: rotate(180deg); width: 19px; text-align: center; height: 61px; margin-top: 19px; line-height: 19px; }
.abox { text-align: center; width: 61px; }
.abox span { display: block; height: 19px; }
.rtg { flex: 1; min-width: 0; display: grid; grid-template-columns: repeat(3, minmax(0, 1fr)); grid-auto-rows: 20px; column-gap: 4px; }
.rtg label { padding-left: 3px; color: #333; }
.rb { height: 23px; width: 64px; justify-self: end; align-self: end; }
.rb button { flex: 1; }
.prow { height: 20px; display: grid; grid-template-columns: 93px repeat(3, minmax(0, 1fr)); gap: 4px; padding-left: 0; }
.prow > span { padding-left: 19px; }
.sub > span { padding-left: 38px; }
.prow label { display: flex; gap: 5px; padding-left: 2px; color: #444; }
.prow label .f { flex: 1; color: #1c1c1c; }
.anc { display: flex; align-items: center; padding-left: 4px; gap: 4px; margin: 2px 0 0; height: 21px; }
.sp { margin-top: 2px; }
.rot { margin-top: 13px; }
.slim { height: 24px; padding-bottom: 0; }
.img { height: 120px; padding-bottom: 0; }
.img .chead { height: 22px; }
.img .chead .ck { margin: 0 1px 0 0; }
.irow { height: 20px; margin-bottom: 2px; display: grid; grid-template-columns: 147px 1fr 18px; align-items: center; gap: 4px; padding-left: 19px; margin-right: -4px; }
.irow label { width: 147px; }
.irow .ck { margin-left: -1px; }
.irow .f { margin: 0 3px 0 -4px; }
.irow > svg { justify-self: start; }
.irow > .tg { margin-left: 2px; }
.tg { width: 11px; height: 11px; }
.swatch { background: #fff; border-color: #777; }
.mhead { height: 55px; flex: none; display: flex; padding: 6px 8px 0 5px; gap: 2px; background: #dedede; border-bottom: 1px solid #888; }
.mhead > .ar { align-self: flex-end; margin-bottom: 5px; }
.thumbm { width: 40px; height: 40px; background: #fff; flex: none; }
.mtxt { flex: 1; padding-left: 8px; display: flex; flex-direction: column; gap: 3px; }
.mt { display: flex; height: 21px; align-items: center; font-size: 15px; margin-right: -5px; }
.mt span { flex: 1; }
.ms { display: flex; gap: 9px; color: #8a8a8a; }
.dim { flex: 1; opacity: .7; color: #666; background: url("data:image/svg+xml,%3Csvg xmlns='http://www.w3.org/2000/svg' width='5' height='4'%3E%3Cpath d='M0 0h5L2.500 4z' fill='%23555'/%3E%3C/svg%3E") no-repeat right 7px center, linear-gradient(#eee, #d4d4d4); }
.addrow { border-top: 1px solid #888; margin-top: 5px; padding: 13px 32px 0 25px; }
.add { width: 100%; height: 29px; font-size: 16px; }
.foot { margin-top: auto; height: 21px; flex: none; display: flex; align-items: center; padding: 0 10px 0 5px; background: linear-gradient(#5a5a5a, #6e6e6e); border-top: 1px solid #444; }
.foot button { height: 20px; display: flex; align-items: center; gap: 8px; padding: 0 6px 0 4px; color: #eee; font-weight: bold; border: solid #444; border-width: 0 1px; margin-right: 4px; }
.grip { flex: 1; height: 6px; border: solid #aaa; border-width: 1px 0; }

.status { height: 27px; flex: none; display: flex; align-items: center; gap: 4px; padding-left: 3px; border-top: 1px solid #858585; }
.taskbar { position: relative; height: 50px; flex: none; display: flex; align-items: stretch; background: linear-gradient(90deg, #d6d6d6 45%, #eaeaea 75%, #eee7ea 84%, #dfe9f5 91%, #ececec); font-family: "Noto Sans", "Noto Sans CJK SC", sans-serif; }
.tb { width: 60px; display: grid; place-items: center; }
.tsearch { width: 212px; height: 34px; margin: 8px 9px 0 2px; padding: 1px; display: flex; align-items: center; background: #fff; }
.tsearch svg { margin: 0 8px; }
.tsearch input { flex: 1; min-width: 0; font-size: 14px; outline: 0; }
.tsearch input::placeholder { color: #888; opacity: 1; }
.tsearch button { width: 45px; height: 32px; background: #0a8fff; color: #fff; }
.app { width: 62px; display: grid; place-items: center; background: linear-gradient(#92c41f, #92c41f) no-repeat center bottom / 51px 3px; }
.active { background-color: #efefef; background-size: 100% 3px; }
.tray { margin-left: auto; display: flex; align-items: center; color: #111; margin-right: 4px; padding-right: 14px; border-right: 1px solid #aaa; }
.temp { width: 51px; padding-left: 10px; font-size: 18px; white-space: nowrap; }
.sky { font-size: 18px; width: 37px; margin-left: 10px; }
.chev { margin-left: 18px; }
.spk { margin-left: 10px; }
.wifi { margin-left: 11px; }
.pen { margin-left: 15px; }
.ime { width: 18px; margin-left: 14px; font-size: 18px; }
.clock { width: 98px; margin-left: 10px; display: flex; flex-direction: column; align-items: center; font-size: 15px; line-height: 21px; }
.n1 { margin-left: 9px; }
.n2 { margin-left: 20px; }
.badge { font-size: 14px; fill: #111; }
.mark { position: absolute; right: 10px; top: 20px; font-size: 15px; color: #fff; opacity: .7; text-shadow: 0 0 1px #888; }
```
